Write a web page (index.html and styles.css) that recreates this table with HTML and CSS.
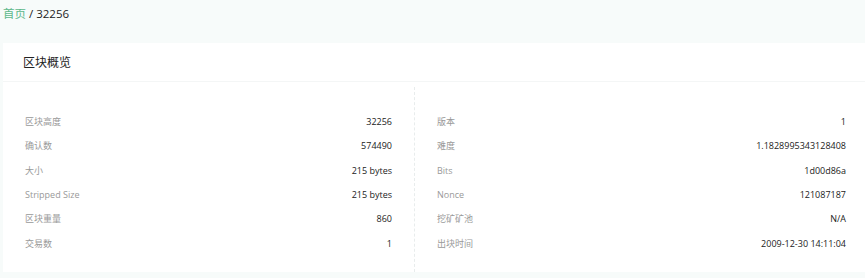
FILE: index.html
```html
<!DOCTYPE html>
<html lang="zh">
<head>
<meta charset="utf-8">
<link rel="stylesheet" href="styles.css">
</head>
<body>
<div class="page">
  <div class="crumb"><a class="crumb-link">首页</a><span class="crumb-sep"> / </span><span class="crumb-cur">32256</span></div>
  <div class="card">
    <div class="card-head">区块概览</div>
    <div class="card-body">
      <div class="col col-left">
        <div class="row"><span class="label">区块高度</span><span class="value">32256</span></div>
        <div class="row"><span class="label">确认数</span><span class="value">574490</span></div>
        <div class="row"><span class="label">大小</span><span class="value">215 bytes</span></div>
        <div class="row"><span class="label">Stripped Size</span><span class="value">215 bytes</span></div>
        <div class="row"><span class="label">区块重量</span><span class="value">860</span></div>
        <div class="row"><span class="label">交易数</span><span class="value">1</span></div>
      </div>
      <div class="col col-right">
        <div class="row"><span class="label">版本</span><span class="value">1</span></div>
        <div class="row"><span class="label">难度</span><span class="value">1.1828995343128408</span></div>
        <div class="row"><span class="label">Bits</span><span class="value">1d00d86a</span></div>
        <div class="row"><span class="label">Nonce</span><span class="value">121087187</span></div>
        <div class="row"><span class="label">挖矿矿池</span><span class="value">N/A</span></div>
        <div class="row"><span class="label">出块时间</span><span class="value">2009-12-30 14:11:04</span></div>
      </div>
    </div>
  </div>
</div>
</body>
</html>
```
FILE: styles.css
```css
html, body {
  margin: 0;
  padding: 0;
  background: #f7fbfa;
  overflow: hidden;
}
body {
  font-family: "Open Sans", "Noto Sans CJK SC", sans-serif;
  color: #333;
}
.page {
  padding: 0 0 0 3px;
}
.crumb {
  height: 43px;
  padding-top: 5px;
  box-sizing: border-box;
  font-size: 11.5px;
  line-height: 18px;
  color: #222;
}
.crumb-link {
  color: #5cb88a;
}
.card {
  background: #fff;
  display: flex;
  flex-direction: column;
}
.card-head {
  height: 39px;
  box-sizing: border-box;
  padding: 12px 0 0 20px;
  font-size: 12px;
  line-height: 16px;
  color: #222;
  border-bottom: 1px solid #f4f6f6;
}
.card-body {
  display: grid;
  grid-template-columns: 412px 1fr;
  padding-top: 5px;
}
.col {
  display: flex;
  flex-direction: column;
  padding: 22.5px 22px 17px 22px;
}
.col-left {
  border-right: 1px dashed #e8ecec;
}
.col-right {
  padding: 22.5px 19px 17px 22px;
}
.row {
  display: flex;
  justify-content: space-between;
  align-items: center;
  height: 24.3px;
  font-size: 9px;
}
.label {
  color: #999;
}
.value {
  color: #222;
}
```
